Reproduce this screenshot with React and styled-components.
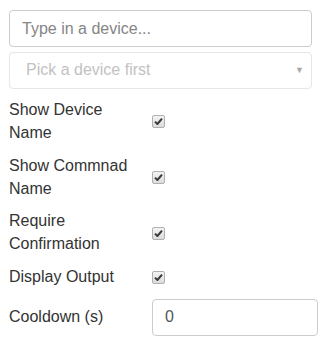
import React from "react";
import styled, { createGlobalStyle } from "styled-components";

const Global = createGlobalStyle`
  html, body { margin: 0; padding: 0; background: #fff; }
  body {
    font-family: "Liberation Sans", Arial, sans-serif;
    font-size: 16px;
    line-height: 1.42857;
    color: #333;
  }
  * { box-sizing: border-box; }
`;

const Page = styled.div`
  padding: 10px 0 0 9px;
  display: flex;
  flex-direction: column;
`;

const TextInput = styled.input`
  display: block;
  width: ${(p) => p.$width || "303px"};
  height: 37px;
  padding: 6px 12px;
  font: inherit;
  font-size: 16px;
  color: #555;
  background: #fff;
  border: 1px solid #ccc;
  border-radius: 4px;
  outline: none;
  &::placeholder { color: #858585; opacity: 1; }
`;

const SelectBox = styled.div`
  position: relative;
  margin-top: 5px;
  width: 303px;
  height: 37px;
  padding: 6px 16px;
  border: 1px solid #e6e6e6;
  border-radius: 4px;
  color: #c2c2c2;
  background: #fff;
`;

const Arrow = styled.span`
  position: absolute;
  right: 7px;
  top: 11px;
  font-size: 9px;
  color: #a8a8a8;
`;

const Rows = styled.div`
  margin-top: 10px;
  display: flex;
  flex-direction: column;
  gap: 10px;
`;

const Row = styled.div`
  display: grid;
  grid-template-columns: 143px 166px;
  align-items: center;
`;

const Label = styled.div`
  width: 132px;
`;

const Check = styled.span`
  display: inline-flex;
  align-items: center;
  justify-content: center;
  width: 13px;
  height: 13px;
  border: 1px solid #b0b0b0;
  border-radius: 2px;
  background: linear-gradient(#f4f4f4, #dcdcdc);
  margin-top: -2px;
`;

const Checkbox = () => (
  <Check>
    <svg width="9" height="9" viewBox="0 0 9 9">
      <path d="M1 4.6 L3.4 7 L8 1.6" fill="none" stroke="#3a3a3a" strokeWidth="2" strokeLinejoin="round" />
    </svg>
  </Check>
);

const rows = [
  "Show Device Name",
  "Show Commnad Name",
  "Require Confirmation",
  "Display Output",
];

export default function App() {
  return (
    <>
      <Global />
      <Page>
        <TextInput placeholder="Type in a device..." />
        <SelectBox>
          Pick a device first
          <Arrow>▼</Arrow>
        </SelectBox>
        <Rows>
          {rows.map((r) => (
            <Row key={r}>
              <Label>{r}</Label>
              <div><Checkbox /></div>
            </Row>
          ))}
          <Row>
            <Label>Cooldown (s)</Label>
            <TextInput $width="166px" defaultValue="0" />
          </Row>
        </Rows>
      </Page>
    </>
  );
}
